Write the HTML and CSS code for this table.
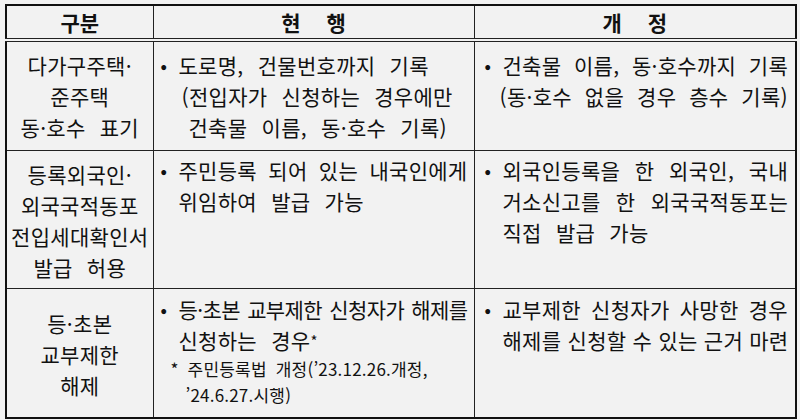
FILE: index.html
```html
<!DOCTYPE html>
<html lang="ko">
<head>
<meta charset="utf-8">
<link rel="stylesheet" href="styles.css">
</head>
<body>
<table class="tbl">
  <colgroup>
    <col class="c1">
    <col class="c2">
    <col class="c3">
  </colgroup>
  <thead>
    <tr>
      <th>구분</th>
      <th><span class="sp">현</span>행</th>
      <th><span class="sp">개</span>정</th>
    </tr>
  </thead>
  <tbody>
    <tr class="r1">
      <td class="cat">다가구주택·<br>준주택<br>동·호수 표기</td>
      <td class="mid">
        <div class="item">
          <span class="dot">•</span>
          <div class="lines">
            <span class="ln">도로명, 건물번호까지 기록</span>
            <span class="ln in1">(전입자가 신청하는 경우에만</span>
            <span class="ln in2">건축물 이름, 동·호수 기록)</span>
          </div>
        </div>
      </td>
      <td class="rgt">
        <div class="item">
          <span class="dot">•</span>
          <div class="lines">
            <span class="ln j">건축물 이름, 동·호수까지 기록</span>
            <span class="ln in0 j">(동·호수 없을 경우 층수 기록)</span>
          </div>
        </div>
      </td>
    </tr>
    <tr class="r2">
      <td class="cat">등록외국인·<br>외국국적동포<br>전입세대확인서<br>발급 허용</td>
      <td class="mid">
        <div class="item">
          <span class="dot">•</span>
          <div class="lines">
            <span class="ln j">주민등록 되어 있는 내국인에게</span>
            <span class="ln">위임하여 발급 가능</span>
          </div>
        </div>
      </td>
      <td class="rgt">
        <div class="item">
          <span class="dot">•</span>
          <div class="lines">
            <span class="ln j">외국인등록을 한 외국인, 국내</span>
            <span class="ln j">거소신고를 한 외국국적동포는</span>
            <span class="ln">직접 발급 가능</span>
          </div>
        </div>
      </td>
    </tr>
    <tr class="r3">
      <td class="cat">등·초본<br>교부제한<br>해제</td>
      <td class="mid">
        <div class="item">
          <span class="dot">•</span>
          <div class="lines">
            <span class="ln j tight">등·초본 교부제한 신청자가 해제를</span>
            <span class="ln">신청하는 경우<span class="ast">*</span></span>
          </div>
        </div>
        <div class="note">
          <span class="nl">* 주민등록법&nbsp;개정(’23.12.26.개정,</span>
          <span class="nl nl2">’24.6.27.시행)</span>
        </div>
      </td>
      <td class="rgt">
        <div class="item">
          <span class="dot">•</span>
          <div class="lines">
            <span class="ln j">교부제한 신청자가 사망한 경우</span>
            <span class="ln j">해제를 신청할 수 있는 근거 마련</span>
          </div>
        </div>
      </td>
    </tr>
  </tbody>
</table>
</body>
</html>
```

FILE: styles.css
```css
html, body {
  margin: 0;
  padding: 0;
  background: #f2f2f2;
}

body {
  padding: 4px 5px 0 5px;
  font-family: "Noto Sans CJK KR", "Noto Sans", sans-serif;
  color: #111;
}

.tbl {
  width: 790px;
  border-collapse: collapse;
  table-layout: fixed;
  border: 2px solid #111;
}

.c1 { width: 147px; }
.c2 { width: 321px; }
.c3 { width: 322px; }

.tbl th,
.tbl td {
  box-sizing: border-box;
  border: 1px solid #222;
  padding: 0;
}

.tbl th {
  height: 33px;
  font-size: 21px;
  font-weight: 700;
  line-height: 32px;
  text-align: center;
  border-bottom: 4px double #222;
}

.sp {
  margin-right: 26px;
}

.tbl td {
  vertical-align: top;
  font-size: 21px;
  line-height: 31px;
  letter-spacing: 0.3px;
  word-spacing: 8px;
}

.tbl td.cat {
  text-align: center;
  vertical-align: middle;
  white-space: nowrap;
  word-spacing: 8px;
}

.r1 td { height: 110px; }
.r2 td { height: 138px; }
.r3 td { height: 130px; }

.r1 .mid, .r1 .rgt { padding-top: 8px; }
.r2 .mid, .r2 .rgt { padding-top: 4px; }
.r3 .mid, .r3 .rgt { padding-top: 5px; }

.r1 .cat { padding-top: 2px; }
.r2 .cat { padding-top: 4px; }
.r3 .cat { padding-top: 4px; }

.mid { padding-left: 7px !important; padding-right: 6px !important; }
.rgt { padding-left: 10px !important; padding-right: 7px !important; }

.item {
  display: flex;
}

.dot {
  flex: 0 0 18px;
  font-size: 17px;
  font-weight: 700;
  letter-spacing: 0;
}

.lines {
  flex: 1 1 auto;
  display: flex;
  flex-direction: column;
  min-width: 0;
}

.ln {
  display: block;
  white-space: nowrap;
}

.ln.j {
  text-align: justify;
  text-align-last: justify;
  word-spacing: 0;
}

.ln.tight {
  letter-spacing: -0.6px;
}

.in0 { margin-left: -3px; }
.in1 { padding-left: 3px; }
.in2 { padding-left: 10px; }

.ast {
  font-size: 15px;
  vertical-align: 2px;
}

.note {
  display: flex;
  flex-direction: column;
  padding-left: 10px;
  font-size: 17px;
  line-height: 26px;
  letter-spacing: 0.2px;
  margin-top: 0;
}

.nl {
  white-space: nowrap;
  word-spacing: 4px;
}

.nl2 { padding-left: 15px; }
```
